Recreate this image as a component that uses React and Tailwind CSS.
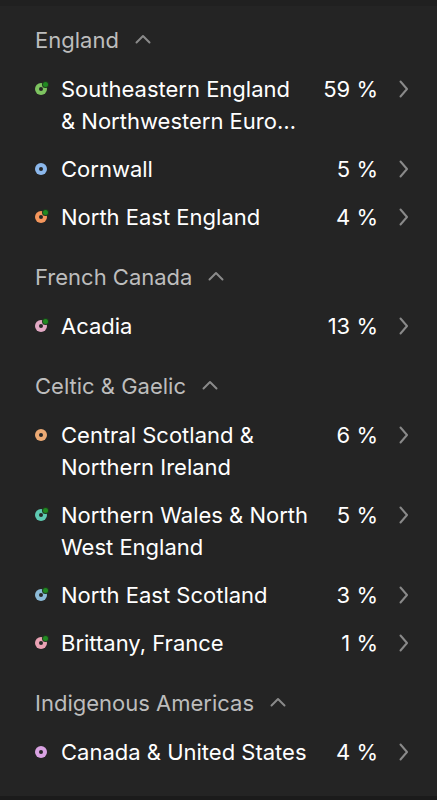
import React from 'react';

const sections = [
  {
    title: 'England',
    rows: [
      { name: 'Southeastern England & Northwestern Europe', lines: ['Southeastern England', '& Northwestern Europe'], pct: '59 %', color: '#7dc360', badge: true },
      { name: 'Cornwall', pct: '5 %', color: '#8cb8ec' },
      { name: 'North East England', pct: '4 %', color: '#f4965c', badge: true },
    ],
  },
  {
    title: 'French Canada',
    rows: [{ name: 'Acadia', pct: '13 %', color: '#e2a9c4', badge: true }],
  },
  {
    title: 'Celtic & Gaelic',
    rows: [
      { name: 'Central Scotland & Northern Ireland', pct: '6 %', color: '#ecaa74' },
      { name: 'Northern Wales & North West England', pct: '5 %', color: '#5ecab2', badge: true },
      { name: 'North East Scotland', pct: '3 %', color: '#8cbbd8', badge: true },
      { name: 'Brittany, France', pct: '1 %', color: '#eaa2b4', badge: true },
    ],
  },
  {
    title: 'Indigenous Americas',
    rows: [{ name: 'Canada & United States', pct: '4 %', color: '#d9a2e2' }],
  },
];

const Dot = ({ color, badge }) => (
  <div className="relative w-[12px] h-[12px]">
    <div
      className="w-[12px] h-[12px] rounded-full flex items-center justify-center"
      style={{ backgroundColor: color }}
    >
      <div className="w-[4px] h-[4px] rounded-full bg-[#262626]" />
    </div>
    {badge && (
      <div className="absolute -top-[1px] -right-[1px] w-[5px] h-[5px] rounded-full bg-[#218a21] ring-1 ring-[#1e3a1e]" />
    )}
  </div>
);

const Chevron = ({ up }) =>
  up ? (
    <svg width="16" height="12" viewBox="0 0 16 12" fill="none">
      <path d="M1.5 9.5 L8 3 L14.5 9.5" stroke="#8a8a8a" strokeWidth="2" strokeLinecap="round" strokeLinejoin="round" />
    </svg>
  ) : (
    <svg width="14" height="18" viewBox="0 0 14 18" fill="none">
      <path d="M3.5 1.5 L10 9 L3.5 16.5" stroke="#8a8a8a" strokeWidth="2" strokeLinecap="round" strokeLinejoin="round" />
    </svg>
  );

const Row = ({ row }) => (
  <div className="flex items-start py-2">
    <div className="h-8 flex items-center">
      <Dot color={row.color} badge={row.badge} />
    </div>
    <div className="ml-[14px] flex-1 min-w-0 text-[22px] leading-8 text-white">
      {row.lines ? (
        row.lines.map((l) => (
          <div key={l} className="w-[240px] truncate">
            {l}
          </div>
        ))
      ) : (
        <div className="line-clamp-2">{row.name}</div>
      )}
    </div>
    <div className="w-[68px] text-right text-[22px] leading-8 text-white">{row.pct}</div>
    <div className="ml-[19px] h-8 flex items-center">
      <Chevron />
    </div>
  </div>
);

export default function App() {
  return (
    <div className="min-h-[800px] bg-[#1b1b1b] font-['Inter',sans-serif]">
      <div className="bg-[#242424] border-t-[6px] border-[#202020] h-[796px] pl-[35px] pr-[26px] pt-[18px]">
        {sections.map((s, i) => (
          <div key={s.title} className={i > 0 ? 'mt-[20px]' : ''}>
            <div className="flex items-center h-8 mb-[9px] text-[22px] text-[#bdbdbd]">
              <span>{s.title}</span>
              <span className="ml-[16px] -mt-[2px]">
                <Chevron up />
              </span>
            </div>
            {s.rows.map((r) => (
              <Row key={r.name} row={r} />
            ))}
          </div>
        ))}
      </div>
    </div>
  );
}
